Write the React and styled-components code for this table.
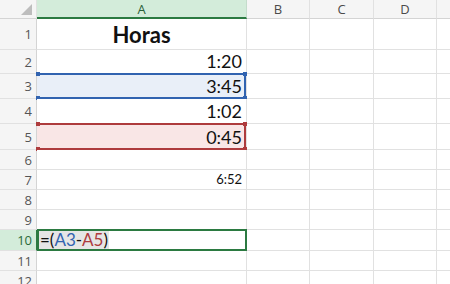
import React from "react";
import styled, { createGlobalStyle, css } from "styled-components";

const GlobalStyle = createGlobalStyle`
  html, body {
    margin: 0;
    padding: 0;
    background: #ffffff;
    overflow: hidden;
  }
  body {
    font-family: "Open Sans", "Noto Sans", sans-serif;
  }
`;

const GRID = "#e1e1e1";
const HEAD_BG = "#f5f5f5";
const GREEN = "#2b7a41";
const GREEN_BG = "#d3ecda";

// E is only partly on screen, its letter falls outside the window
const COLS = ["A", "B", "C", "D", ""];
const ROW_HEIGHTS = [31, 24, 25, 25, 26, 20, 20, 20, 20, 21, 20, 20];

const RANGE_COLORS = {
  blue: { line: "#3163b0", fill: "#e9eff8" },
  red: { line: "#ae3b3d", fill: "#f9e6e6" },
};

const Sheet = styled.div`
  display: grid;
  grid-template-columns: 37px 210px 63px 64px 63px 90px;
  grid-template-rows: 19px ${ROW_HEIGHTS.map((h) => `${h}px`).join(" ")};
  width: 450px;
  height: 284px;
  overflow: hidden;
`;

const Corner = styled.div`
  position: relative;
  background: ${HEAD_BG};
  border-right: 1px solid ${GRID};
  border-bottom: 1px solid #d4d4d4;

  svg {
    position: absolute;
    right: 4px;
    bottom: 3px;
  }
`;

const ColHead = styled.div`
  display: flex;
  align-items: center;
  justify-content: center;
  box-sizing: border-box;
  background: ${({ $active }) => ($active ? GREEN_BG : HEAD_BG)};
  border-right: 1px solid ${({ $active }) => ($active ? "#c4dccb" : GRID)};
  border-bottom: ${({ $active }) =>
    $active ? `2px solid ${GREEN}` : "1px solid #d4d4d4"};
  color: ${({ $active }) => ($active ? "#2a5f37" : "#4a4a4a")};
  font-size: 13px;
  padding-top: ${({ $active }) => ($active ? "1px" : "0")};
`;

const RowHead = styled.div`
  display: flex;
  align-items: center;
  justify-content: flex-end;
  box-sizing: border-box;
  padding-right: 4px;
  background: ${({ $active }) => ($active ? GREEN_BG : HEAD_BG)};
  border-right: 1px solid ${({ $active }) => ($active ? GREEN : "#d4d4d4")};
  border-bottom: 1px solid ${GRID};
  color: ${({ $active }) => ($active ? "#2a6a3a" : "#555555")};
  font-size: 13px;
`;

const Cell = styled.div`
  position: relative;
  display: flex;
  align-items: flex-end;
  justify-content: ${({ $align }) =>
    $align === "center" ? "center" : $align === "left" ? "flex-start" : "flex-end"};
  box-sizing: border-box;
  padding: 0 4px 3px 4px;
  border-right: 1px solid ${GRID};
  border-bottom: 1px solid ${GRID};
  font-family: "Lato", "Liberation Sans", sans-serif;
  font-size: ${({ $size }) => $size || 18}px;
  font-weight: ${({ $bold }) => ($bold ? 700 : 400)};
  line-height: 1;
  color: #111111;
  background: ${({ $range }) => ($range ? RANGE_COLORS[$range].fill : "#ffffff")};

  ${({ $bold }) =>
    $bold &&
    css`
      align-items: center;
      padding-bottom: 0;
      padding-top: 2px;
    `}
`;

const RangeMark = styled.div`
  position: absolute;
  left: 1px;
  right: 0;
  top: -1px;
  bottom: -1px;
  border-top: 2px solid ${({ $color }) => RANGE_COLORS[$color].line};
  border-bottom: 2px solid ${({ $color }) => RANGE_COLORS[$color].line};
  border-right: 2px solid ${({ $color }) => RANGE_COLORS[$color].line};
  pointer-events: none;
`;

const Handle = styled.span`
  position: absolute;
  width: 4px;
  height: 4px;
  background: ${({ $color }) => RANGE_COLORS[$color].line};
  ${({ $top }) => ($top ? "top: -3px;" : "bottom: -3px;")}
  ${({ $left }) => ($left ? "left: -2px;" : "right: -3px;")}
`;

const FormulaCell = styled.div`
  position: relative;
  display: flex;
  align-items: center;
  box-sizing: border-box;
  border-bottom: 1px solid ${GRID};
  border-right: 1px solid ${GRID};
`;

const FormulaBox = styled.div`
  position: absolute;
  left: 0;
  right: -1px;
  top: -1px;
  bottom: -1px;
  border: 2px solid ${GREEN};
  display: flex;
  align-items: center;
  padding-left: 0;
`;

const FormulaText = styled.span`
  font-family: "Lato", "Liberation Sans", sans-serif;
  font-size: 17px;
  line-height: 18px;
  background: #e6e6e6;
  color: #111111;
  padding: 0 1px;
`;

const Ref = styled.span`
  color: ${({ $color }) => RANGE_COLORS[$color].line};
`;

const cells = {
  1: { text: "Horas", align: "center", bold: true, size: 22 },
  2: { text: "1:20" },
  3: { text: "3:45", range: "blue" },
  4: { text: "1:02" },
  5: { text: "0:45", range: "red" },
  7: { text: "6:52", size: 13 },
};

function RangeOutline({ color }) {
  return (
    <RangeMark $color={color}>
      <Handle $color={color} $top $left />
      <Handle $color={color} $top />
      <Handle $color={color} $left />
      <Handle $color={color} />
    </RangeMark>
  );
}

export default function App() {
  return (
    <>
      <GlobalStyle />
      <Sheet>
        <Corner>
          <svg width="11" height="11" viewBox="0 0 11 11">
            <polygon points="11,0 11,11 0,11" fill="#bdbdbd" />
          </svg>
        </Corner>
        {COLS.map((c, i) => (
          <ColHead key={i} $active={c === "A"}>
            {c}
          </ColHead>
        ))}

        {ROW_HEIGHTS.map((_, i) => {
          const row = i + 1;
          const data = cells[row];
          return (
            <React.Fragment key={row}>
              <RowHead $active={row === 10}>{row}</RowHead>
              {row === 10 ? (
                <FormulaCell>
                  <FormulaBox>
                    <FormulaText>
                      =(<Ref $color="blue">A3</Ref>-<Ref $color="red">A5</Ref>)
                    </FormulaText>
                  </FormulaBox>
                </FormulaCell>
              ) : (
                <Cell
                  $align={data?.align}
                  $bold={data?.bold}
                  $size={data?.size}
                  $range={data?.range}
                >
                  {data?.text}
                  {data?.range && <RangeOutline color={data.range} />}
                </Cell>
              )}
              {COLS.slice(1).map((c, j) => (
                <Cell key={j} />
              ))}
            </React.Fragment>
          );
        })}
      </Sheet>
    </>
  );
}
